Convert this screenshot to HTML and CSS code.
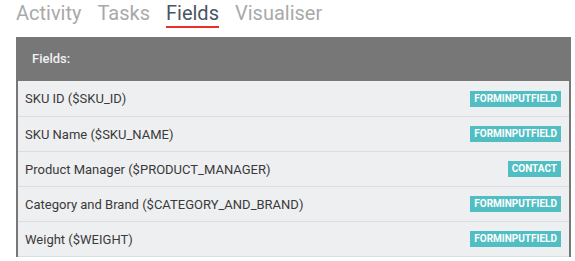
FILE: index.html
```html
<!DOCTYPE html>
<html lang="en">
<head>
    <meta charset="UTF-8">
    <title>Fields</title>
    <link rel="stylesheet" href="styles.css">
</head>
<body>
    <div class="page">
        <nav class="tabs">
            <a class="tab">Activity</a>
            <a class="tab">Tasks</a>
            <a class="tab active">Fields</a>
            <a class="tab">Visualiser</a>
        </nav>

        <div class="panel">
            <div class="panel-header">Fields:</div>
            <div class="row">
                <span>SKU ID ($SKU_ID)</span>
                <span class="badge">FORMINPUTFIELD</span>
            </div>
            <div class="row">
                <span>SKU Name ($SKU_NAME)</span>
                <span class="badge">FORMINPUTFIELD</span>
            </div>
            <div class="row">
                <span>Product Manager ($PRODUCT_MANAGER)</span>
                <span class="badge">CONTACT</span>
            </div>
            <div class="row">
                <span>Category and Brand ($CATEGORY_AND_BRAND)</span>
                <span class="badge">FORMINPUTFIELD</span>
            </div>
            <div class="row">
                <span>Weight ($WEIGHT)</span>
                <span class="badge">FORMINPUTFIELD</span>
            </div>
        </div>
    </div>
</body>
</html>
```

FILE: styles.css
```css
body {
    margin: 0;
    font-family: Roboto, sans-serif;
    background: #fff;
    color: #333;
}

.page {
    padding: 0 4px 0 16px;
}

.tabs {
    display: flex;
    align-items: flex-start;
    gap: 16px;
    height: 37px;
}

.tab {
    font-size: 20px;
    color: #a9a9a9;
    line-height: 25px;
    padding-top: 1px;
    border-bottom: 2px solid transparent;
}

.tab.active {
    color: #4b5563;
    border-bottom-color: #e8302a;
}

.panel {
    border-left: 2px solid #777;
    border-right: 2px solid #777;
}

.panel-header {
    background: #777;
    color: #f1f1f1;
    font-size: 13px;
    font-weight: 500;
    height: 44px;
    line-height: 44px;
    padding-left: 14px;
}

.row {
    display: flex;
    justify-content: space-between;
    align-items: center;
    height: 34px;
    padding: 0 8px 0 7px;
    background: #eeeff1;
    border-bottom: 1px solid #dcdde0;
    font-size: 13px;
    color: #3a3a3a;
}

.panel-header + .row {
    height: 35px;
}

.badge {
    background: #51bec3;
    color: #fff;
    font-size: 10px;
    font-weight: 700;
    padding: 2px 4px;
    line-height: 12px;
}
```
